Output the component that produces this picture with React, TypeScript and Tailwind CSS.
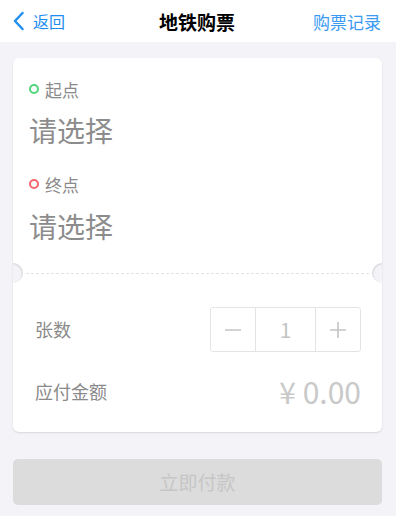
import React, { useState } from 'react';

const font = { fontFamily: '"Noto Sans CJK SC", "Noto Sans", sans-serif' };

const App: React.FC = () => {
  const [count, setCount] = useState<number>(1);

  return (
    <div style={font} className="w-[396px] h-[516px] bg-[#f4f4f8] flex flex-col overflow-hidden">
      {/* nav bar */}
      <div className="h-[42px] bg-white flex items-center justify-between pl-[13px] pr-[15px] shrink-0">
        <div className="flex items-center gap-[9px] text-[#1d8df0] w-[90px]">
          <svg width="11" height="20" viewBox="0 0 11 20" fill="none">
            <path d="M9.5 2 L2 10 L9.5 18" stroke="#1d8df0" strokeWidth="2.4" strokeLinecap="round" strokeLinejoin="round" />
          </svg>
          <span className="text-[16px] leading-none">返回</span>
        </div>
        <div className="text-[19px] font-semibold text-black leading-none">地铁购票</div>
        <div className="w-[90px] text-right text-[17px] text-[#3b9bf2] leading-none">购票记录</div>
      </div>

      <div className="pt-[16px] pl-[13px] pr-[14px]">
        {/* ticket card */}
        <div className="bg-white rounded-[6px] shadow-[0_1px_2px_rgba(0,0,0,0.12)] overflow-hidden">
          <div className="pl-[16px] pr-[16px] pt-[22px] pb-[29px]">
            <div className="flex items-center h-[18px] gap-[6px]">
              <span className="w-[10px] h-[10px] rounded-full border-2 border-[#4fd67a]" />
              <span className="text-[17px] text-[#8a8a8a] leading-none">起点</span>
            </div>
            <div className="mt-[14px] h-[36px] flex items-center text-[28px] text-[#8c8c8c] leading-none">请选择</div>
            <div className="mt-[27px] flex items-center h-[18px] gap-[6px]">
              <span className="w-[10px] h-[10px] rounded-full border-2 border-[#f2676e]" />
              <span className="text-[17px] text-[#8a8a8a] leading-none">终点</span>
            </div>
            <div className="mt-[15px] h-[36px] flex items-center text-[28px] text-[#8c8c8c] leading-none">请选择</div>
          </div>

          {/* perforation */}
          <div className="relative h-0">
            <div className="mx-[13px] border-t border-dashed border-[#e2e2e2]" />
            <span className="absolute left-[-10px] top-[-10px] w-[20px] h-[20px] rounded-full bg-[#f4f4f8] shadow-[inset_-1px_1px_2px_rgba(0,0,0,0.12)]" />
            <span className="absolute right-[-10px] top-[-10px] w-[20px] h-[20px] rounded-full bg-[#f4f4f8] shadow-[inset_1px_1px_2px_rgba(0,0,0,0.12)]" />
          </div>

          <div className="pl-[22px] pr-[21px] pt-[34px] pb-[21px]">
            <div className="flex items-center justify-between">
              <span className="text-[18px] text-[#8a8a8a]">张数</span>
              <div className="flex h-[45px] border border-[#e4e4e4] rounded-[3px] text-[#bdbdbd]">
                <button onClick={() => setCount(Math.max(1, count - 1))} className="w-[44px] flex items-center justify-center">
                  <svg width="18" height="18" viewBox="0 0 18 18">
                    <path d="M1 9 H17" stroke="#c4c4c4" strokeWidth="1.6" />
                  </svg>
                </button>
                <div className="w-[61px] flex items-center justify-center border-x border-[#e4e4e4] text-[21px] text-[#c4c4c4]">{count}</div>
                <button onClick={() => setCount(count + 1)} className="w-[44px] flex items-center justify-center">
                  <svg width="18" height="18" viewBox="0 0 18 18">
                    <path d="M1 9 H17 M9 1 V17" stroke="#c4c4c4" strokeWidth="1.6" />
                  </svg>
                </button>
              </div>
            </div>
            <div className="mt-[19px] h-[40px] flex items-center justify-between">
              <span className="text-[18px] text-[#8a8a8a]">应付金额</span>
              <span className="text-[30px] text-[#c9c9c9] leading-none">¥ {(0).toFixed(2)}</span>
            </div>
          </div>
        </div>

        <button className="mt-[27px] w-full h-[46px] rounded-[5px] bg-[#dcdcdc] text-[19px] text-[#c6c6c6]">立即付款</button>
      </div>
    </div>
  );
};

export default App;
